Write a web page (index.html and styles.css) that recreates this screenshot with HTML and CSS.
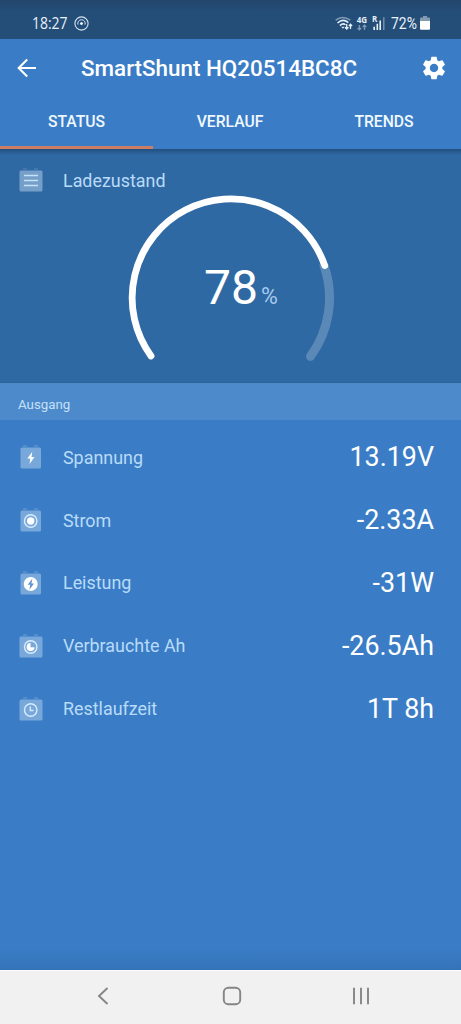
FILE: index.html
```html
<!DOCTYPE html>
<html lang="de">
<head>
<meta charset="utf-8">
<title>SmartShunt</title>
<link rel="stylesheet" href="styles.css">
</head>
<body>
<div class="statusbar">
  <span class="clock">18:27</span>
  <svg class="cast" width="15" height="15" viewBox="0 0 15 15" fill="none" stroke="#d5e4f2">
    <circle cx="7.5" cy="7.5" r="6.6" stroke-width="1.1"/>
    <path d="M4 8.6a3.7 3.7 0 1 1 7 0" stroke-width="1"/>
    <circle cx="7.5" cy="7.6" r="1.4" fill="#fff" stroke="none"/>
  </svg>
  <svg class="signals" width="52" height="20" viewBox="0 -3 52 20">
    <g fill="none" stroke="#e6f0f8" stroke-width="1.5">
      <path d="M.7 4.2Q7.5-1.4 15.3 4.2" stroke="#7f9bb7"/>
      <path d="M2.5 7Q8 2 13.3 6.600M4.900 9.600Q8 6.600 10.500 8.800"/>
      <path d="M11.700 8v4.800M10 11.200l1.700 1.800 1.700-1.800M15.500 13V8.400M13.900 10l1.600-1.800 1.600 1.800" stroke-width="1.300"/>
    </g>
    <path d="M6.200 10.800h3.400L8 12.800z" fill="#e6f0f8"/>
    <text x="21.700" y="6.800" class="net">4G</text>
    <path d="M24.400 9v4.600M22.600 12l1.800 1.800 1.800-1.800M29.500 14V9.300M27.700 11l1.800-1.800 1.800 1.800" fill="none" stroke="#7f9bb7" stroke-width="1.300"/>
    <text x="37" y="6.300" class="net">R</text>
    <path d="M39.200 10.800V14M42.300 7.800V14M45.200 4.500V14" stroke="#e6f0f8" stroke-width="1.600"/>
    <path d="M48.800 1.200V14" stroke="#7f9bb7" stroke-width="1.300"/>
  </svg>
  <span class="charge">72%</span>
  <svg class="cell" width="10" height="14" viewBox="0 0 10 14">
    <path d="M3 0h4v1.500h2q1 0 1 1V5H0V2.500q0-1 1-1h2z" fill="#8299b0"/>
    <path d="M0 5h10v7.800q0 1-1 1H1q-1 0-1-1z" fill="#fff"/>
  </svg>
</div>

<div class="appbar">
  <div class="titlebar">
    <svg class="back" width="20" height="20" viewBox="0 0 20 20" fill="none" stroke="#fff" stroke-width="2.100">
      <path d="M19 10H2M10.200 1.500L1.700 10l8.500 8.500"/>
    </svg>
    <h1>SmartShunt HQ20514BC8C</h1>
    <svg class="gear" width="28" height="28" viewBox="0 0 24 24" fill="#fff">
      <path d="M19.140 12.940c.04-.3.060-.61.060-.94s-.02-.64-.07-.94l2.030-1.580c.18-.14.230-.41.120-.61l-1.920-3.320c-.12-.22-.37-.29-.59-.22l-2.390.96c-.5-.38-1.030-.7-1.620-.94l-.36-2.540c-.04-.24-.24-.41-.48-.41h-3.840c-.24 0-.43.17-.47.41l-.36 2.540c-.59.24-1.130.57-1.620.94l-2.390-.96c-.22-.08-.47 0-.59.22L2.740 8.870c-.12.21-.08.47.12.610l2.030 1.580c-.05.3-.09.63-.09.94s.02.64.070.94l-2.030 1.580c-.18.14-.23.41-.12.610l1.920 3.320c.12.22.37.29.59.220l2.390-.96c.5.38 1.030.7 1.620.94l.36 2.540c.05.24.24.41.48.410h3.840c.24 0 .44-.17.470-.41l.36-2.540c.59-.24 1.130-.56 1.620-.94l2.390.96c.22.08.47 0 .59-.22l1.920-3.320c.12-.22.070-.47-.12-.61l-2.010-1.580zM12 15.600c-1.980 0-3.600-1.620-3.600-3.600s1.620-3.600 3.600-3.600 3.600 1.620 3.600 3.600-1.620 3.600-3.600 3.600z"/>
    </svg>
  </div>
  <div class="tabs">
    <div class="tab active">STATUS</div>
    <div class="tab">VERLAUF</div>
    <div class="tab">TRENDS</div>
  </div>
</div>

<div class="soc">
  <div class="soc-head">
    <svg class="icon" width="24" height="24" viewBox="0 0 24 24">
      <path class="pole" d="M4 1h4M15 1h4"/>
      <rect class="box" x=".5" y="2.500" width="23" height="21" rx="1.500"/>
      <path class="line" d="M5 7.500h14M5 12.500h14M5 17.500h14"/>
    </svg>
    <span class="label">Ladezustand</span>
  </div>
  <svg class="gauge" width="210" height="170" viewBox="0 0 210 170" fill="none" stroke-linecap="round">
    <path d="M198 72.500A99 99 0 0 1 184.500 163.400" stroke="#5a89b7" stroke-width="9"/>
    <path d="M25 163A99 99 0 1 1 198.700 72.500" stroke="#fff" stroke-width="6.800"/>
  </svg>
  <div class="percent"><span class="num">78</span><span class="unit">%</span></div>
</div>

<div class="section">Ausgang</div>

<div class="list">
  <div class="row">
    <svg class="icon" width="24" height="24" viewBox="0 0 24 24">
      <path class="pole" d="M4 1h4M15 1h4"/>
      <rect class="box" x="1.500" y="2.500" width="20.500" height="21" rx="1.500"/>
      <path d="M13.300 6.800L8.300 13.500h3l-.8 5.500 5-7h-3z" fill="#fff"/>
    </svg>
    <span class="label">Spannung</span><span class="value">13.19V</span>
  </div>
  <div class="row">
    <svg class="icon" width="24" height="24" viewBox="0 0 24 24">
      <path class="pole" d="M4 1h4M15 1h4"/>
      <rect class="box" x="1.500" y="2.500" width="20.500" height="21" rx="1.500"/>
      <circle class="ring" cx="11.700" cy="13" r="6.200"/>
      <circle cx="11.700" cy="13" r="3.700" fill="#fff"/>
    </svg>
    <span class="label">Strom</span><span class="value">-2.33A</span>
  </div>
  <div class="row">
    <svg class="icon" width="24" height="24" viewBox="0 0 24 24">
      <path class="pole" d="M4 1h4M15 1h4"/>
      <rect class="box" x="1.500" y="2.500" width="20.500" height="21" rx="1.500"/>
      <circle cx="11.700" cy="13" r="7" fill="#fff"/>
      <path d="M13.400 7.500L8.700 13.700h2.600l-.9 5 4.600-6.200h-2.600z" fill="#5f93cb"/>
    </svg>
    <span class="label">Leistung</span><span class="value">-31W</span>
  </div>
  <div class="row">
    <svg class="icon" width="24" height="24" viewBox="0 0 24 24">
      <path class="pole" d="M4 1h4M15 1h4"/>
      <rect class="box" x=".5" y="2.500" width="23" height="21" rx="1.500"/>
      <circle class="ring" cx="11.700" cy="13" r="6.200"/>
      <path d="M11.500 9v4.200h4.100A4 4 0 1 1 11.500 9z" fill="#fff"/>
    </svg>
    <span class="label">Verbrauchte Ah</span><span class="value">-26.5Ah</span>
  </div>
  <div class="row">
    <svg class="icon" width="24" height="24" viewBox="0 0 24 24">
      <path class="pole" d="M4 1h4M15 1h4"/>
      <rect class="box" x=".5" y="2.500" width="23" height="21" rx="1.500"/>
      <circle class="ring" cx="11.700" cy="13" r="6.200"/>
      <path d="M11.300 9.500v4h3.200" fill="none" stroke="#d8edff" stroke-width="1.300"/>
    </svg>
    <span class="label">Restlaufzeit</span><span class="value">1T 8h</span>
  </div>
</div>

<div class="navbar">
  <svg width="20" height="20" viewBox="0 0 20 20"><path d="M13.500 2L5 10l8.500 8"/></svg>
  <svg width="20" height="20" viewBox="0 0 20 20"><rect x="1.800" y="1.800" width="16.400" height="16.400" rx="4.500"/></svg>
  <svg width="20" height="20" viewBox="0 0 20 20"><path d="M3 1.700v16.600M10 1.700v16.600M17 1.700v16.600"/></svg>
</div>
</body>
</html>
```

FILE: styles.css
```css
* {
  box-sizing: border-box;
}
body {
  margin: 0;
  width: 461px;
  height: 1024px;
  display: flex;
  flex-direction: column;
  overflow: hidden;
  background: #3a7dc6;
  color: #fff;
  font-family: Roboto, sans-serif;
}
svg {
  display: block;
  flex: none;
}
.statusbar {
  height: 39px;
  padding: 7px 31.500px 0 32px;
  display: flex;
  align-items: center;
  background: linear-gradient(#23466c, #244d78 30%);
  color: #e9f2fa;
}
.clock {
  width: 35px;
  font: 15.500px "Open Sans", sans-serif;
  transform: scaleX(.9);
  transform-origin: left;
  white-space: nowrap;
}
.cast {
  margin-left: 7px;
}
.signals {
  margin-left: auto;
}
.net {
  font: bold 8px/1 "Open Sans", sans-serif;
  fill: #e6f0f8;
}
.charge {
  width: 27px;
  margin-left: 4px;
  margin-right: 2px;
  font-size: 16px;
  transform: scaleX(.87);
  transform-origin: left;
}
.titlebar {
  height: 58px;
  display: flex;
  align-items: center;
  padding: 0 13px 0 17px;
}
.titlebar h1 {
  margin: 0 auto 0 44px;
  font-size: 22.400px;
  font-weight: 500;
  white-space: nowrap;
}
.tabs {
  height: 52px;
  display: flex;
}
.tab {
  flex: 1;
  padding-top: 15px;
  text-align: center;
  font-size: 15.700px;
  line-height: 20px;
  font-weight: 500;
  color: #f0f8ff;
}
.tab.active {
  flex: none;
  width: 153px;
  border-bottom: 3px solid #cb7e63;
}
.soc {
  height: 234px;
  position: relative;
  background: linear-gradient(#224f7e, #2e69a3 6px);
  box-shadow: inset 0 -1px #2c659a;
}
.soc-head {
  display: flex;
  align-items: center;
  height: 62.500px;
  padding-left: 19px;
}
.icon {
  margin-right: 20px;
}
.soc-head .icon {
  margin-top: -1.500px;
}
.pole {
  stroke: #6a9dd4;
}
.box {
  fill: #78a7d9;
}
.soc .box {
  fill: #759fc9;
}
.soc .pole {
  stroke: #5688bb;
}
.line {
  stroke: #c4e2fa;
  stroke-width: 1.600;
}
.ring {
  fill: none;
  stroke: #d8edff;
  stroke-width: 1.400;
}
.label {
  font-size: 17.900px;
  color: #b9dbf8;
}
/* the dial lies over the panel and its heading */
.gauge {
  position: absolute;
  left: 126px;
  top: 44px;
}
.percent {
  position: absolute;
  left: 204px;
  top: 111px;
  display: flex;
  align-items: baseline;
  line-height: 56px;
}
.num {
  font-size: 48px;
}
.unit {
  margin-left: 3px;
  font-size: 23px;
  color: #a5c9ec;
}
.section {
  height: 37px;
  padding: 6px 18px 0;
  line-height: 31px;
  background: #4d8acb;
  color: #c5e0f8;
  font-size: 13.300px;
}
.list {
  flex: 1;
  padding-top: 6px;
  background: linear-gradient(transparent 96%, #3473b8);
}
.row {
  height: 62.800px;
  display: flex;
  align-items: center;
  padding: 0 27px 0 19px;
}
.value {
  margin-left: auto;
  font-size: 26.850px;
}
.navbar {
  height: 54px;
  display: flex;
  align-items: center;
  justify-content: space-between;
  padding: 0 90px 3px 93.500px;
  background: #f1f1f1;
  border-top: 1px solid #fff;
}
.navbar svg {
  fill: none;
  stroke: #858585;
  stroke-width: 1.900;
}
```
